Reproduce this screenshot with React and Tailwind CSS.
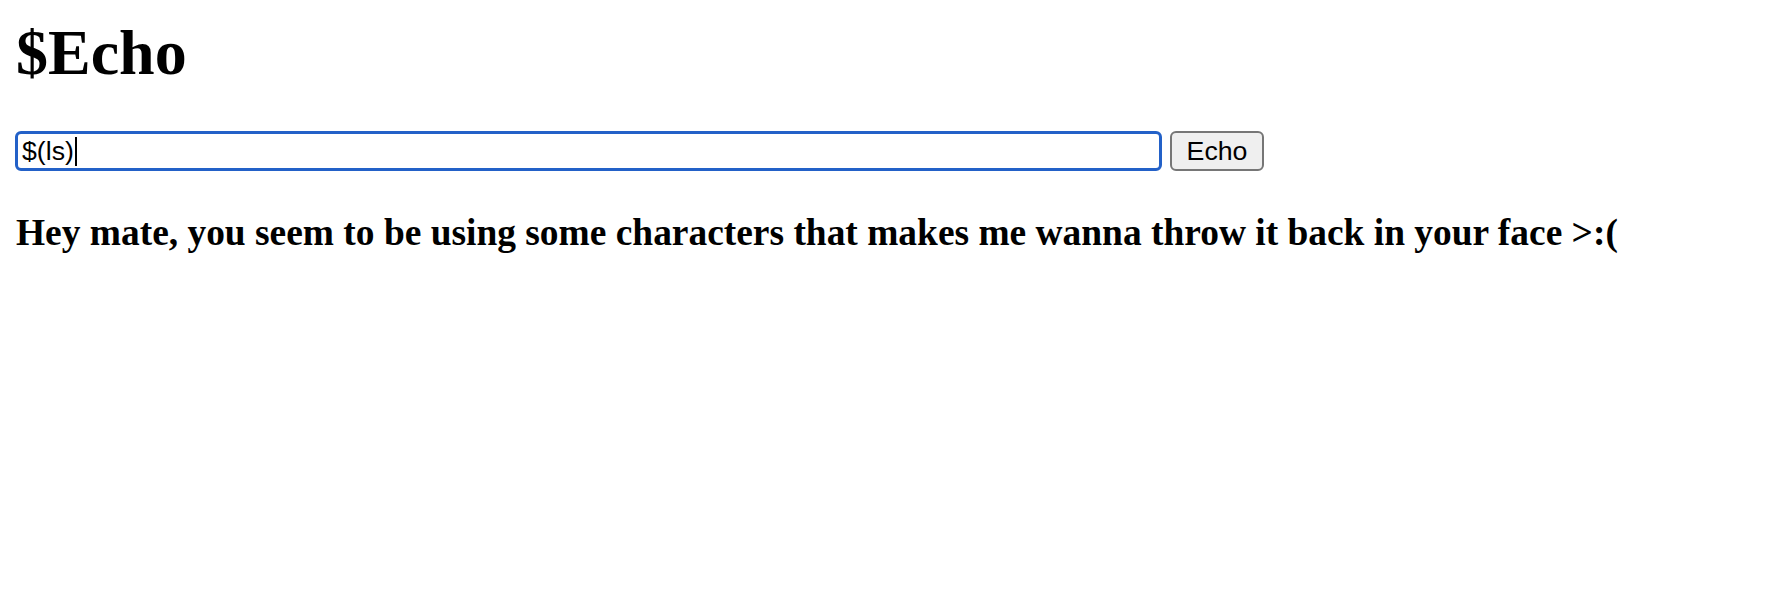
export default function App() {
  return (
    <div className="min-h-screen bg-white px-[16px] pt-[16px] text-black font-['Liberation_Serif',serif]">
      {/* TITLE */}
      <h1 className="text-[64px] font-bold leading-[74px]">$Echo</h1>

      {/* FORM */}
      <form
        onSubmit={(e) => e.preventDefault()}
        className="mt-[41px] flex items-center gap-[8px]"
      >
        <div className="ml-[-1px] flex h-[40px] w-[1147px] items-center rounded-[6px] border-[3px] border-[#2361c8] px-[4px] text-[26.7px] font-['Liberation_Sans',Arial,sans-serif]">
          <span>$(ls)</span>
          <span className="ml-[1px] h-[29px] w-[2px] bg-black" />
        </div>
        <button
          type="submit"
          className="h-[40px] w-[94px] rounded-[6px] border-2 border-[#767676] bg-[#efefef] text-[26.7px] leading-none font-['Liberation_Sans',Arial,sans-serif]"
        >
          Echo
        </button>
      </form>

      {/* MESSAGE */}
      <h3 className="mt-[40px] text-[37.44px] font-bold leading-[43px]">
        Hey mate, you seem to be using some characters that makes me wanna throw it back in your face &gt;:(
      </h3>
    </div>
  );
}
